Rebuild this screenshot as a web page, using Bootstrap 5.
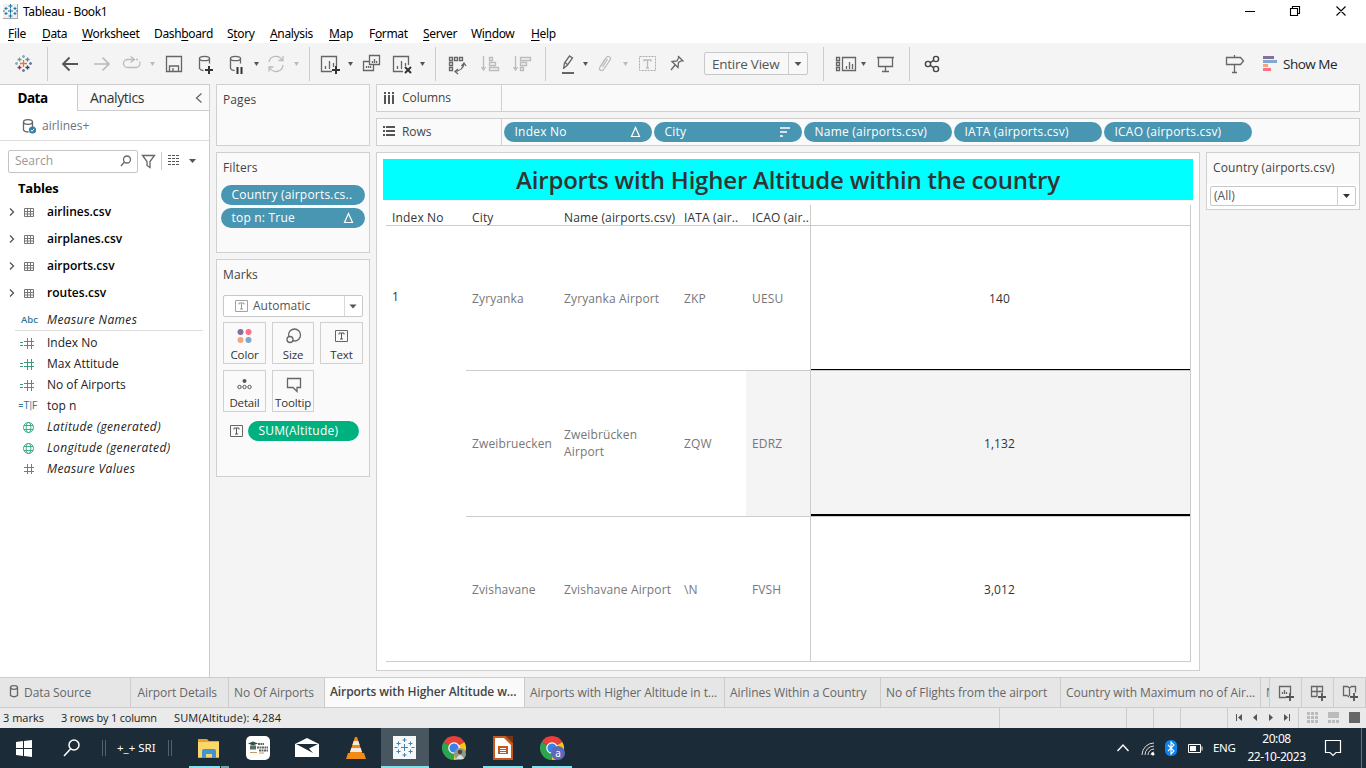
<!DOCTYPE html>
<html lang="en">
<head>
<meta charset="utf-8">
<meta name="viewport" content="width=device-width, initial-scale=1">
<title>Tableau - Book1</title>
<link href="https://cdn.jsdelivr.net/npm/bootstrap@5.3.0/dist/css/bootstrap.min.css" rel="stylesheet">
<style>
body{width:1366px;height:768px;overflow:hidden;font-family:"Open Sans","Noto Sans",sans-serif;font-size:12px;line-height:16px;color:#333;background:#f4f4f4}
svg{display:block;flex:none;overflow:hidden}
.ui{font-family:"Noto Sans","Open Sans",sans-serif;color:#000}
.titlebar{height:24px;background:#fff;letter-spacing:-.35px}
.menubar{height:19px;background:#fff;display:grid;grid-template-columns:34px 40px 72px 73px 43px 59px 40px 54px 48px 60px 40px;padding-left:8px;letter-spacing:-.35px}
.menubar u{text-underline-offset:2px}
.toolbar{height:41px;background:#f4f4f4}
.ln{fill:none;stroke:#666;stroke-width:1.3}
.off{stroke:#bbb}
.fl{fill:#555}
.drop{width:104px;height:23px;border:1px solid #c8c8c8;border-radius:2px;background:#f8f8f8;font-size:13.5px;letter-spacing:-.25px;padding-left:7px;color:#555}
.showme{font-size:13.5px;letter-spacing:-.5px;margin-right:29px}
.work{height:593px}
.panel{width:210px;background:#fff;border-right:1px solid #ccc;border-top:1px solid #ccc}
.ptabs{height:26px;font-size:14px}
.ptab-on{width:77px;font-size:13.5px;letter-spacing:-.5px}
.ptab-off{background:#fafafa;border-left:1px solid #ccc;border-bottom:1px solid #ccc;padding-left:12px;letter-spacing:-.4px}
.source{height:30px;border-bottom:1px solid #ddd}
.findrow{height:24px}
.searchbox{width:130px;height:23px;border:1px solid #c4c4c4;border-radius:2px;color:#999;padding-left:6px}
.tables{font-size:13px;padding:7px 0 0 18px;height:25px;letter-spacing:-.2px}
.tname{height:27px;color:#000;font-weight:600;letter-spacing:0}
.fname{height:21px;color:#222}
.fname i{letter-spacing:.36px}
.fname.first{height:25px;padding-top:3px;border-bottom:1px solid #ddd;margin:0 6px 0 15px}
.fname.fcalc{margin-top:1px}
.gutter{width:47px}
.first .gutter{width:32px}
.abc{padding-left:6px;font-size:9.5px;font-weight:600;color:#33789a}
.tf{padding-left:18px;font-size:10px;color:#33789a;font-family:Roboto,sans-serif}
.shelf{background:#fafafa;border:1px solid #d0d0d0}
.side{width:154px;margin-left:6px}
.sub{color:#444;letter-spacing:.1px}
.pages{height:62px;padding:7px 6px}
.filters{height:101px;margin-top:6px;padding:7px 4px 0}
.filters .sub{padding-left:2px;margin-bottom:9px}
.filters .pill{margin-bottom:3px}
.marks{height:218px;margin-top:6px;padding:7px 6px 0}
.marks .select{margin:12px 0 5px;width:140px}
.pill{height:20px;border-radius:10px;background:#4996b2;color:#fff;padding:0 11px 0 10.5px;letter-spacing:.22px}
.filters .pill{letter-spacing:.2px}
.pill-w{width:148px}
.green{background:#00b180;width:111px}
.select{height:22px;border:1px solid #c8c8c8;border-radius:2px;background:#fff;color:#555}
.mbtns{display:grid;grid-template-columns:43px 42px 43px;column-gap:6px;row-gap:6px}
.mbtn{height:42px;border:1px solid #d0d0d0;color:#333;font-size:11.5px;letter-spacing:-.15px;display:flex;flex-direction:column;align-items:center}
.sumrow{margin-top:9px}
.main-col{width:984px;margin-left:6px}
.rowshelf{height:28px;margin-bottom:6px}
.label-col{width:125px;border-right:1px solid #d0d0d0;color:#444;letter-spacing:-.05px}
.pills{gap:2px;padding-left:2px}
.view{width:824px;height:519px;background:#fff;border:1px solid #d0d0d0;padding-top:6px}
.headline{height:41px;background:#0ff;color:#333;font-weight:600;font-size:24px;margin:0 6px;letter-spacing:-.2px}
.crosstab{display:grid;grid-template-columns:80px 92px 120px 68px 64px 381px;grid-template-rows:21px 145px 146px 145px;width:805px;margin:5px 0 0 9px}
.crosstab>div{padding:0 0 0 6px;display:flex;align-items:center;color:#777;letter-spacing:.13px;line-height:17px}
.crosstab .hd{color:#333;border-bottom:1px solid #ccc;white-space:nowrap;letter-spacing:.15px;padding-top:4px}
.crosstab .cell{border-bottom:1px solid #ccc}
.crosstab .idx{grid-row:2/5;align-items:start;padding-top:62px;color:#333;border-bottom:1px solid #ccc}
.crosstab .edge{border-left:1px solid #ccc;border-right:1px solid #ccc}
.crosstab .num{justify-content:center;padding:0 2px 0 0;color:#333}
.crosstab .tall{padding-bottom:1px}
.hot{background:#f4f4f4}
.rule1{box-shadow:inset 0 -1px #000}
.rule2{box-shadow:inset 0 -2px #000}
.qfilter{width:154px;height:58px;background:#fff;border:1px solid #d0d0d0;margin-left:6px}
.qhead{height:31px;padding:7px 6px;background:#fafafa}
.qsel{margin:2px 3px 0;padding-left:3px;height:20px}
.sheets{height:31px;background:#e6e6e6;border-top:1px solid #ccc;border-bottom:1px solid #ccc;display:grid;grid-template-columns:131px 98px 96px 200px 200px 156px 180px 200px 9px 32px 32px 32px;color:#666;white-space:nowrap;letter-spacing:-.07px}
.sheets>div{border-right:1px solid #ccc;padding-left:5px;display:flex;align-items:center;overflow:hidden}
.sheets .det{padding-left:6.5px}
.sheets .on{background:#fafafa;color:#444;font-weight:600;letter-spacing:-.09px;padding-bottom:2px}
.sheets .ic{padding-left:0}
.status{height:20px;background:#eaeaea;font-size:11px;color:#222}
.st1{width:61px;padding-left:3px}
.st2{width:113px;letter-spacing:-.2px}
.st3{letter-spacing:.15px}
.task{height:40px;background:#1b2b38;color:#fff;font-family:"Noto Sans",sans-serif}
.sri{width:47px;font-size:11.5px}
.eng{width:32px;font-size:11.5px;letter-spacing:-.3px}
.clock{width:63px;font-size:12px;line-height:18px;letter-spacing:-.45px}
</style>
</head>
<body class="d-flex flex-column">
<header class="titlebar ui d-flex align-items-center">
<svg width="23" height="24" viewBox="0 0 23 24"><path d="M3 18.500h15M17.500 4v14" stroke="#aaa" fill="none"/><rect x="3" y="4" width="14" height="14" fill="#f0f0f0"/><path d="M8 11h5M10.500 8.500v5M8.500 6h4M10.500 4v4M8.500 16h4M10.500 14v4M4.500 8.500h3M6 7v3M13.500 8.500h3M15 7v3M4.500 13.500h3M6 12v3M13.500 13.500h3M15 12v3M3 11h2M16 11h2" stroke="#1f78a8" fill="none"/></svg>
<span>Tableau - Book1</span>
<svg class="ms-auto" width="136" height="24" viewBox="1230 0 136 24"><path d="M1245 11.500h10M1290.500 8.500h7v7h-7zM1292.500 8v-1.500h7v7h-1.500M1336.500 6.500l9 9M1345.500 6.500l-9 9" fill="none" stroke="#000" stroke-width="1.100"/></svg>
</header>
<nav class="menubar ui align-items-center"><span><u>F</u>ile</span><span><u>D</u>ata</span><span><u>W</u>orksheet</span><span>Dash<u>b</u>oard</span><span>S<u>t</u>ory</span><span><u>A</u>nalysis</span><span><u>M</u>ap</span><span>F<u>o</u>rmat</span><span><u>S</u>erver</span><span>Wi<u>n</u>dow</span><span><u>H</u>elp</span></nav>
<div class="toolbar d-flex align-items-center">
<svg width="48" height="41" viewBox="0 43 48 41" fill="none" stroke-width="1.300"><path d="M20 63.500h7M23.500 60v7" stroke="#e8762d"/><path d="M17.500 59.500h4M19.500 57.500v4" stroke="#6a9a9c"/><path d="M25.500 59.500h4M27.500 57.500v4" stroke="#5b87a5"/><path d="M17.500 67.500h4M19.500 65.500v4" stroke="#c72035"/><path d="M25.500 67.500h4M27.500 65.500v4" stroke="#1f447e"/><path d="M22 56.500h3M23.500 55v3M15 63.500h3M16.500 62v3" stroke="#7eb0b8"/><path d="M29 63.500h3M30.500 62v3M22 70.500h3M23.500 69v3" stroke="#6b7ba8"/><path d="M47.500 47v34" stroke="#ccc" stroke-width="1"/></svg>
<svg width="111" height="41" viewBox="48 43 111 41"><g stroke-width="1.800" stroke="#555" fill="none"><path d="M78 64H63M69.500 57.500L63 64l6.500 6.500"/></g><g stroke-width="1.600" stroke="#b8b8b8" fill="none"><path d="M94 64h15M102.500 57.500L109 64l-6.500 6.500"/></g><path class="ln off" d="M134 59.500h-6.500a4 4 0 000 8h9a4 4 0 003-6M130.500 56.500l4 3-4 3M136 59.500h2"/><path d="M150 62h5l-2.500 4z" fill="#bbb"/></svg>
<svg width="151" height="41" viewBox="159 43 151 41"><path class="ln" d="M166.500 56.500h15v15h-15zM169.500 71v-5h9v5M173 71v-3"/><ellipse class="ln" cx="204.500" cy="58.500" rx="5" ry="2.200"/><path class="ln" d="M199.500 58.500v10q1 2 4 2M209.500 58.500v5"/><path d="M209 66v8M205 70h8" stroke="#333" stroke-width="2"/><ellipse class="ln" cx="235.500" cy="58.500" rx="5" ry="2.200"/><path class="ln" d="M230.500 58.500v10q1 2 4 2M240.500 58.500v5"/><path d="M237.500 67v7M241.500 67v7" stroke="#333" stroke-width="2"/><path class="fl" d="M254 62h5l-2.500 4z"/><path class="ln off" d="M269 62a7 7 0 0113-2M283 65a7 7 0 01-13 3M278.500 60.500h4.500v-4.500M273.500 67H269v4.500"/><path d="M294 62h5l-2.500 4z" fill="#bbb"/><path d="M309.500 47v34" stroke="#ccc"/></svg>
<svg width="126" height="41" viewBox="310 43 126 41"><path class="ln" d="M332 71.500h-10.500v-15h15V66M325.500 69v-3M329.500 69v-8M333.500 67v-4"/><path d="M336 66v8M332 70h8" stroke="#333" stroke-width="2"/><path class="fl" d="M348 62h5l-2.500 4z"/><path class="ln" d="M369.500 55.500h10v9h-10zM369 61.500h-5.500v9h10V65M372.500 63v-2M374.500 63v-4M376.500 63v-2M366.500 68v-2M368.500 68v-2M370.500 68v-2"/><path class="ln" d="M403 71.500h-9.500v-15h15V65M397.500 69v-3M401.500 69v-8M405.500 66v-3"/><path d="M405 67l6 6M411 67l-6 6" stroke="#333" stroke-width="2"/><path class="fl" d="M420 62h5l-2.500 4z"/><path d="M435.500 47v34" stroke="#ccc"/></svg>
<svg width="110" height="41" viewBox="436 43 110 41"><path class="ln" d="M449.500 57.500h3v3h-3zM454.500 57.500h3v3h-3zM459.500 57.500h3v3h-3zM449.500 62.500h3v3h-3zM449.500 67.500h3v3h-3zM455 71.500q8-1 9-8M461.500 66l2.500-3 2 3M458 69l-3 2.500 3 2.500"/><path class="ln off" d="M483.500 56v13M481.500 67l2 3 2-3M489.500 57.500h3v3h-3zM489.500 62.500h6v3h-6zM489.500 67.500h9v3h-9z"/><path class="ln off" d="M515.500 56v13M513.500 67l2 3 2-3M520.500 57.500h10v3h-10zM520.500 62.500h6v3h-6zM520.500 67.500h3v3h-3z"/><path d="M545.500 47v34" stroke="#ccc"/></svg>
<svg width="158" height="41" viewBox="546 43 158 41"><path class="ln" d="M563.500 69l1-6 5-7 3 2-5 7-3.500 3M565 62.500l3 2.500"/><path d="M562 73h12" stroke="#666" stroke-width="2"/><path class="fl" d="M583 62h5l-2.500 4z"/><path class="ln off" d="M601 66l5-8c2-3 6-1 4 2l-6 9c-2 3-6 1-4-2l5-8M602.500 67l5-8"/><path d="M623 62h5l-2.500 4z" fill="#bbb"/><rect x="639.500" y="56.500" width="16" height="14" fill="none" stroke="#aaa" stroke-dasharray="2 1"/><path class="ln off" d="M644 61.500v-1.500h7v1.500M647.500 60v8M646 68h3"/><path class="ln" d="M678 56l5.500 5.500M679 57l-2 4-5 .500 6 6 .500-5 3.500-2M675 65l-4 5"/></svg>
<div class="drop d-flex align-items-center"><span>Entire View</span><svg class="ms-auto" width="19" height="21"><path d="M.5 0v21" stroke="#d0d0d0"/><path class="fl" d="M6.500 9h7l-3.500 4z"/></svg></div>
<svg width="145" height="41" viewBox="808 43 145 41"><path d="M823.500 47v34M909.500 47v34" stroke="#ccc"/><path class="ln" d="M836.500 57.500h3v3h-3zM836.500 62.500h3v3h-3zM836.500 67.500h3v3h-3zM842.500 57.500h13v13h-13zM846.500 69v-3M849.500 69v-7M852.500 69v-5"/><path class="fl" d="M861 62h5l-2.500 4z"/><path class="ln" d="M877 57.500h17M878.500 58v8.500h14V58M885.500 67v4M882 71.500h7"/><g fill="none" stroke="#444" stroke-width="1.400"><circle cx="928" cy="64" r="2.600"/><circle cx="936" cy="59" r="2.600"/><circle cx="936" cy="69" r="2.600"/><path d="M930.200 62.600l3.600-2.200M930.200 65.400l3.600 2.200"/></g></svg>
<svg class="ms-auto" width="63" height="41" viewBox="1220 43 63 41"><path class="ln" d="M1226.500 57.500h14l3 3.500-3 3.500h-14zM1234.500 55v2.500M1234.500 64.500v8M1232 72.500h5"/><path d="M1263 56h11v3h-11z" fill="#84709b"/><path d="M1263 60h14v3h-14z" fill="#7fa7cf"/><path d="M1263 64h5v3h-5z" fill="#f5a57c"/><path d="M1263 68h8v3h-8z" fill="#fc7183"/></svg>
<span class="text-dark showme">Show Me</span>
</div>
<main class="work d-flex">
<aside class="panel d-flex flex-column">
<div class="ptabs d-flex"><div class="ptab-on fw-bold text-black d-flex align-items-center justify-content-center"><span class="pe-2 me-1">Data</span></div><div class="ptab-off flex-grow-1 d-flex align-items-center"><span>Analytics</span><svg class="ms-auto" width="14" height="12"><path class="ln" d="M6.500 1.500l-5 4.500 5 4.500"/></svg></div></div>
<div class="source d-flex align-items-center"><svg width="42" height="28" viewBox="0 111 42 28"><ellipse class="ln" cx="28" cy="121" rx="4.500" ry="2.300"/><path class="ln" d="M23.500 121v8q1 2 5 2M32.500 121v5"/><circle cx="32.500" cy="129" r="3.600" fill="#2f80a8"/><path d="M30.800 129l1.200 1.300 2.200-2.500" fill="none" stroke="#fff"/></svg><span class="text-secondary">airlines+</span></div>
<div class="d-flex align-items-center mt-2 ms-2 findrow"><div class="searchbox d-flex align-items-center"><span>Search</span><svg class="ms-auto me-1" width="14" height="14"><circle class="ln" cx="8" cy="5.500" r="3.500"/><path class="ln" d="M5.500 8L2 12"/></svg></div><svg width="64" height="23" viewBox="138 149 64 23"><path class="ln" d="M142.500 154.500h12l-4.500 6v6l-3-2v-4z"/><path d="M161.500 151v18" stroke="#ccc"/><path d="M168 154.500h12M168 157.500h12M168 160.500h12M168 163.500h12" stroke="#555" stroke-dasharray="3 1"/><path class="fl" d="M189 158h7l-3.500 4z"/></svg></div>
<div class="text-black fw-bold tables">Tables</div>
<div class="tname d-flex align-items-center"><svg class="gutter" width="47" height="20"><use href="#tbl"/></svg>airlines.csv</div>
<div class="tname d-flex align-items-center"><svg class="gutter" width="47" height="20"><use href="#tbl"/></svg>airplanes.csv</div>
<div class="tname d-flex align-items-center"><svg class="gutter" width="47" height="20"><use href="#tbl"/></svg>airports.csv</div>
<div class="tname d-flex align-items-center"><svg class="gutter" width="47" height="20"><use href="#tbl"/></svg>routes.csv</div>
<div class="fname first d-flex align-items-center"><span class="gutter abc">Abc</span><i>Measure Names</i></div>
<div class="fname d-flex align-items-center fcalc"><svg class="gutter" height="20"><use href="#calc"/></svg>Index No</div>
<div class="fname d-flex align-items-center"><svg class="gutter" height="20"><use href="#calc"/></svg>Max Attitude</div>
<div class="fname d-flex align-items-center"><svg class="gutter" height="20"><use href="#calc"/></svg>No of Airports</div>
<div class="fname d-flex align-items-center"><span class="gutter tf">=T|F</span>top n</div>
<div class="fname d-flex align-items-center"><svg class="gutter" height="20"><use href="#globe"/></svg><i>Latitude (generated)</i></div>
<div class="fname d-flex align-items-center"><svg class="gutter" height="20"><use href="#globe"/></svg><i>Longitude (generated)</i></div>
<div class="fname d-flex align-items-center"><svg class="gutter" height="20"><path d="M24 8.500h10M24 12.500h10M27.500 5v10M31.500 5v10" stroke="#3a9c76" fill="none"/></svg><i>Measure Values</i></div>
</aside>
<section class="side d-flex flex-column">
<div class="shelf pages sub">Pages</div>
<div class="shelf filters"><div class="sub">Filters</div><div class="pill d-flex align-items-center text-nowrap">Country (airports.cs..</div><div class="pill d-flex align-items-center">top n: True<svg class="ms-auto" width="11" height="12"><use href="#delta"/></svg></div></div>
<div class="shelf marks"><div class="sub">Marks</div>
<div class="select d-flex align-items-center"><svg width="29" height="20"><g transform="translate(11 4)" opacity=".6"><use href="#tt"/></g></svg>Automatic<svg class="ms-auto" width="18" height="20"><path d="M.5 0v20" stroke="#d8d8d8"/><path class="fl" d="M5.500 8.500h7l-3.500 4z"/></svg></div>
<div class="mbtns">
<div class="mbtn"><svg width="41" height="24"><circle cx="16.500" cy="9" r="3" fill="#84709b"/><circle cx="24.500" cy="9" r="3" fill="#fc7183"/><circle cx="16.500" cy="17" r="3" fill="#f5a57c"/><circle cx="24.500" cy="17" r="3" fill="#7fa7cf"/></svg>Color</div>
<div class="mbtn"><svg width="41" height="24"><circle class="ln" cx="21.500" cy="12" r="6"/><circle stroke="#666" stroke-width="1.300" cx="17" cy="16.500" r="3" fill="#fafafa"/></svg>Size</div>
<div class="mbtn"><svg width="41" height="24"><g transform="translate(14 7)"><use href="#tt"/></g></svg>Text</div>
<div class="mbtn"><svg width="41" height="24"><circle cx="20.500" cy="10" r="2" fill="#555"/><g fill="none" stroke="#555"><circle cx="15.500" cy="16" r="1.700"/><circle cx="20.500" cy="16" r="1.700"/><circle cx="25.500" cy="16" r="1.700"/></g></svg>Detail</div>
<div class="mbtn"><svg width="41" height="24"><path class="ln" d="M14.500 7.500h13v9h-3.500v4l-4-4h-5.500z"/></svg>Tooltip</div>
</div>
<div class="d-flex align-items-center sumrow"><svg width="25" height="20"><g transform="translate(7 4)"><use href="#tt"/></g></svg><div class="pill green d-flex align-items-center">SUM(Altitude)</div></div>
</div>
</section>
<section class="main-col d-flex flex-column">
<div class="shelf rowshelf d-flex"><div class="label-col d-flex align-items-center"><svg width="25" height="20"><path d="M8 4v2M12 4v2M16 4v2M8 7v9M12 7v9M16 7v9" stroke="#555" stroke-width="2"/></svg>Columns</div></div>
<div class="shelf rowshelf d-flex"><div class="label-col d-flex align-items-center"><svg width="25" height="20"><path d="M6 5h2M6 9h2M6 13h2M9 5h9M9 9h9M9 13h9" stroke="#555" stroke-width="2"/></svg>Rows</div>
<div class="d-flex align-items-center pills">
<div class="pill pill-w d-flex align-items-center">Index No<svg class="ms-auto" width="11" height="12"><use href="#delta"/></svg></div>
<div class="pill pill-w d-flex align-items-center">City<svg class="ms-auto" width="11" height="12"><path d="M0 2h10M0 6h7M0 10h3" stroke="#fff" stroke-width="1.600"/></svg></div>
<div class="pill pill-w d-flex align-items-center">Name (airports.csv)</div>
<div class="pill pill-w d-flex align-items-center">IATA (airports.csv)</div>
<div class="pill pill-w d-flex align-items-center">ICAO (airports.csv)</div>
</div></div>
<div class="d-flex align-items-start">
<div class="view">
<div class="headline d-flex align-items-center justify-content-center"><span>Airports with Higher Altitude within the country</span></div>
<div class="crosstab">
<div class="hd">Index No</div><div class="hd">City</div><div class="hd">Name (airports.csv)</div><div class="hd">IATA (air..</div><div class="hd">ICAO (air..</div><div class="hd edge"></div>
<div class="idx">1</div>
<div class="cell">Zyryanka</div><div class="cell">Zyryanka Airport</div><div class="cell">ZKP</div><div class="cell">UESU</div><div class="cell edge num rule1">140</div>
<div class="cell">Zweibruecken</div><div class="cell tall">Zweibrücken<br>Airport</div><div class="cell">ZQW</div><div class="cell hot">EDRZ</div><div class="cell edge num hot rule2">1,132</div>
<div class="cell">Zvishavane</div><div class="cell text-nowrap">Zvishavane Airport</div><div class="cell">\N</div><div class="cell">FVSH</div><div class="cell edge num">3,012</div>
</div>
</div>
<div class="qfilter"><div class="sub qhead">Country (airports.csv)</div><div class="select d-flex align-items-center qsel">(All)<svg class="ms-auto" width="18" height="20"><path d="M.5 0v20" stroke="#d0d0d0"/><path fill="#333" d="M6 8h7l-3.500 4z"/></svg></div></div>
</div>
</section>
</main>
<nav class="sheets">
<div><svg width="19" height="29"><ellipse class="ln" cx="9" cy="9.500" rx="3.500" ry="1.800"/><path class="ln" d="M5.500 9.500v8q3.500 2.500 7 0v-8"/></svg>Data Source</div><div class="det">Airport Details</div><div>No Of Airports</div><div class="on">Airports with Higher Altitude w...</div><div>Airports with Higher Altitude in t...</div><div>Airlines Within a Country</div><div>No of Flights from the airport</div><div>Country with Maximum no of Air...</div><div>N</div>
<div class="ic"><svg width="31" height="29" viewBox="1270 678 31 29"><path class="ln" d="M1286 697.500h-6.500v-11h11v7M1282.500 694v-2M1284.500 694v-4M1286.500 694v-2"/><path d="M1290 693v8M1286 697h8" stroke="#555" stroke-width="1.800"/></svg></div>
<div class="ic"><svg width="31" height="29" viewBox="1302 678 31 29"><path class="ln" d="M1317 696.500h-5.500v-10h11v6M1317 686v10.500M1311 691.500h11"/><path d="M1322 693v8M1318 697h8" stroke="#555" stroke-width="1.800"/></svg></div>
<div class="ic"><svg width="31" height="29" viewBox="1334 678 31 29"><path class="ln" d="M1349 697l-2-1.500h-3.500v-9h4l2 1.500 2-1.500h4v6M1349.500 688v8"/><path d="M1354 693v8M1350 697h8" stroke="#555" stroke-width="1.800"/></svg></div>
</nav>
<div class="status d-flex align-items-center"><span class="st1">3 marks</span><span class="st2">3 rows by 1 column</span><span class="st3">SUM(Altitude): 4,284</span>
<svg class="ms-auto" width="368" height="20" viewBox="998 708 368 20"><path d="M999.500 708v20M1126.500 708v20M1153.500 708v20M1180.500 708v20M1227.500 708v20M1298.500 708v20" stroke="#ccc"/><path class="fl" d="M1236 714h1v7h-1zM1242 714v7l-4-3.500zM1257 714v7l-4-3.500zM1269 714v7l4-3.500zM1284 714v7l4-3.500zM1289 714h1v7h-1z"/><path d="M1307 713.500h11M1307 717.500h11M1307 721.500h11" stroke="#bbb" stroke-width="3" stroke-dasharray="3 1"/><path d="M1328 712h11v6h-11zM1328 720h3v3h-3zM1332 720h3v3h-3zM1336 720h3v3h-3z" fill="#bbb"/><path d="M1349 712h11v11h-11z" fill="#666"/></svg></div>
<footer class="task d-flex align-items-center">
<svg width="117" height="40" viewBox="0 728 117 40"><path d="M16 742l7-1v7h-7zM24 741l8-1v8h-8zM16 749h7v7l-7-1zM24 749h8v8l-8-1z" fill="#fff"/><circle cx="74" cy="745" r="5" fill="none" stroke="#fff" stroke-width="1.500"/><path d="M70.500 749L64 756" stroke="#fff" stroke-width="1.500"/><path d="M102.500 740v16M105.500 740v16" stroke="#55616b"/></svg>
<span class="sri">+_+ SRI</span>
<svg width="217" height="40" viewBox="164 728 217 40"><path d="M168.500 740v16M171.500 740v16" stroke="#55616b"/><path d="M198 739h9l2 2h10v17h-21z" fill="#e5a623"/><path d="M198 742h21v15h-21z" fill="#fbd668"/><path d="M202 758v-7q0-2 2-2h10q2 0 2 2v7h-4v-4h-6v4z" fill="#3f95d2"/><path d="M189 766h31v2h-31z" fill="#84e0ea"/><path d="M221 766h8v2h-8z" fill="#6ba9ad"/>
<rect x="246" y="736" width="24" height="24" rx="5" fill="#fff"/><path d="M248 743.500l5-2 5 2-5 2z" fill="#345048"/><path d="M250 745.500h6v4h-6z" fill="#557068"/><path d="M258 744h6M257 747.500h11M259 750.500h9" stroke="#5d6560" stroke-width="1.800" stroke-dasharray="2 .500"/><path d="M250 752.500h7M259 753h5" stroke="#c29a6a"/>
<path d="M295 744l12-6 12 6v13h-24z" fill="#fff"/><path d="M296 744h22l-9 4.500 4 4.500z" fill="#1b2b38"/>
<path d="M346 759l2-6h16l2 6z" fill="#f28a14"/><path d="M355 737h2l6 18q-7 3-14 0z" fill="#f28a14"/><path d="M353.700 741h4.600l1.300 4h-7.200zM351.300 748h9.400l1.200 4h-11.800z" fill="#f3ece2"/></svg>
<svg width="205" height="40" viewBox="381 728 205 40"><path d="M381 728h48v40h-48z" fill="#48565f"/><path d="M381 766h48v2h-48zM483 766h40v2h-40zM532 766h40v2h-40z" fill="#84e0ea"/><path d="M393 736h23v23h-23z" fill="#f5f7f8"/><path d="M401 747.500h7M404.500 744v7M402.500 740h4M404.500 738v4M402.500 755h4M404.500 753v4M396.500 743.500h4M398.500 741.500v4M408.500 743.500h4M410.500 741.500v4M396.500 751.500h4M398.500 749.500v4M408.500 751.500h4M410.500 749.500v4M394.500 747.500h3M411.500 747.500h3" stroke="#4283aa" fill="none"/>
<g id="chrome"><path d="M454 748L443.600 742A12 12 0 01464.400 742z" fill="#e8413a"/><path d="M454 748L464.400 742A12 12 0 01454 760z" fill="#fbc516"/><path d="M454 748L454 760A12 12 0 01443.600 742z" fill="#2ea44e"/><circle cx="454" cy="748" r="5.800" fill="#fff"/><circle cx="454" cy="748" r="4.600" fill="#3b80e8"/></g>
<circle cx="460" cy="754" r="6" fill="#8c9c8c"/><circle cx="460" cy="752" r="2.300" fill="#5a4035"/><path d="M456 759q4-8 8 0" fill="#ddd"/>
<path d="M493 736h13l7 7v17h-20z" fill="#c8571c"/><path d="M506 736h7v7z" fill="#7c3512"/><path d="M495 738h9l7 7v13h-16z" fill="#fff"/><rect x="498" y="746" width="10" height="8" fill="#c8571c"/><path d="M500 748.500h6M500 750.500h6M500 752.500h6" stroke="#fff"/>
<use href="#chrome" x="98"/><circle cx="558" cy="753" r="7" fill="#5b69b8"/><text x="555.200" y="756.500" font-size="10" fill="#fff">a</text></svg>
<svg class="ms-auto" width="97" height="40" viewBox="1116 728 97 40"><path d="M1117.500 751l5.500-6 5.500 6" fill="none" stroke="#fff" stroke-width="1.400"/><path d="M1142 755a12 12 0 0112-12M1145 755a9 9 0 019-9M1148 755a6 6 0 016-6M1151 755a3 3 0 013-3" fill="none" stroke="#ddd"/><circle cx="1153" cy="754" r="1.500" fill="#fff"/><rect x="1165" y="740" width="12" height="16" rx="5.500" fill="#0a84f0"/><path d="M1168 745l6 6-3 3v-12l3 3-6 6" fill="none" stroke="#fff" stroke-width="1.100"/><path d="M1188.500 744.500h12v8h-12zM1202 746.500v4" fill="none" stroke="#fff"/><path d="M1190 746h6v5h-6z" fill="#fff"/></svg>
<span class="eng">ENG</span><div class="clock text-center">20:08<br>22-10-2023</div>
<svg width="58" height="40" viewBox="1308 728 58 40"><path d="M1325.500 740.500h15v12h-4.500l-3 3-3-3h-4.500z" fill="none" stroke="#fff" stroke-width="1.200"/><path d="M1361.500 728v40" stroke="#66727b"/></svg>
</footer>
<svg width="0" height="0" class="position-absolute"><defs>
<g id="tbl"><path d="M10 6.500l3.500 3.500-3.500 3.500" fill="none" stroke="#555" stroke-width="1.300"/><path d="M24.500 6.500h9v8h-9zM24 9.500h10M24 12h10M27.500 7v7M30.500 7v7" fill="none" stroke="#777"/></g>
<g id="calc"><path d="M20 9.500h3M20 12.500h3M24 8.500h10M24 12.500h10M27.500 5v11M31.500 5v11" fill="none" stroke="#3a9c76"/></g>
<g id="globe" fill="none" stroke="#3fae84"><circle cx="28.500" cy="10.500" r="5"/><ellipse cx="28.500" cy="10.500" rx="2.300" ry="5"/><path d="M24 8.500h9M24 12.500h9"/></g>
<g id="delta"><path d="M1.500 10.500h8l-4-9z" fill="none" stroke="#fff" stroke-width="1.200"/></g>
<g id="tt"><path d="M.5 .5h12v11h-12z" fill="none" stroke="#666"/><path d="M4 4.500v-1.500h5v1.500M6.500 3v6M5 9h3" fill="none" stroke="#555"/></g>
</defs></svg>
</body>
</html>
